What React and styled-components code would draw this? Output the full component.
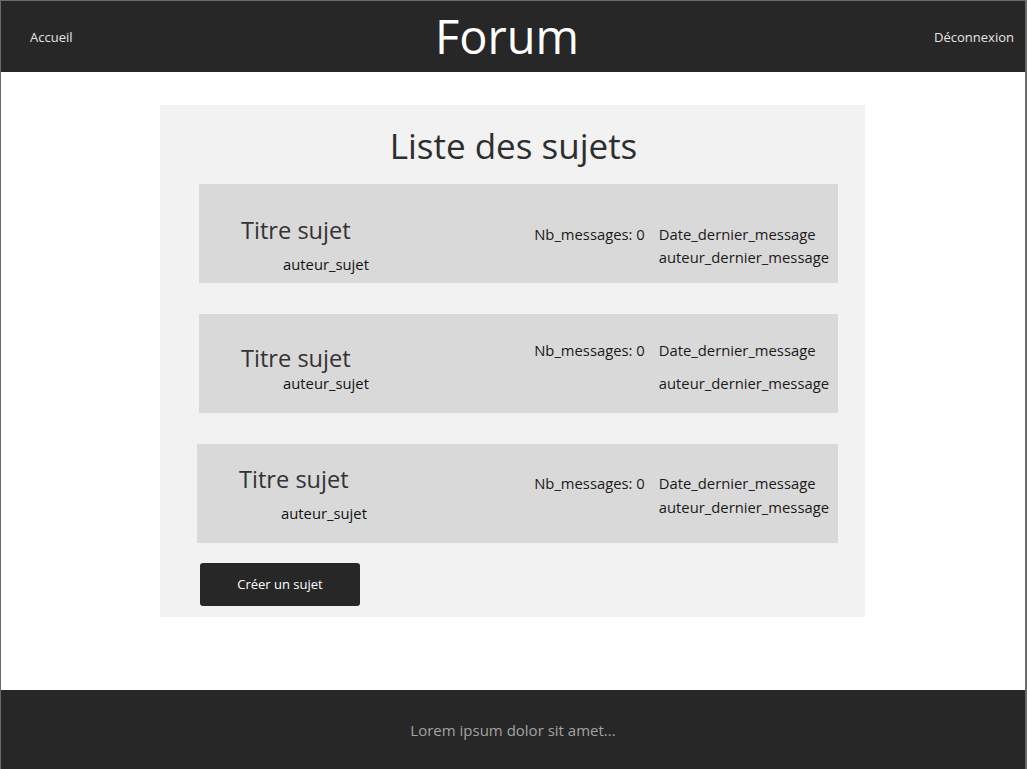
import React from 'react';
import styled, { createGlobalStyle } from 'styled-components';

const GlobalStyle = createGlobalStyle`
  html, body {
    margin: 0;
    padding: 0;
    background: #ffffff;
  }
  body {
    font-family: "Open Sans", "Liberation Sans", sans-serif;
  }
  * {
    box-sizing: border-box;
  }
`;

const Page = {
  Frame: styled.div`
    display: flex;
    flex-direction: column;
    height: 769px;
    border-top: 1px solid #6a6a6a;
    border-left: 1px solid #6a6a6a;
    border-right: 2px solid #6a6a6a;
    background: #ffffff;
  `,
  Header: styled.header`
    display: flex;
    align-items: center;
    justify-content: space-between;
    height: 71px;
    padding: 0 11px 0 29px;
    background-color: #272727;
  `,
  NavLink: styled.a`
    width: 120px;
    font-size: 13px;
    line-height: 18px;
    color: #e6e6e6;
    text-align: ${props => (props.right ? 'right' : 'left')};
    cursor: pointer;
  `,
  Brand: styled.h1`
    margin: 0 30px 2px 0;
    font-size: 47px;
    font-weight: 400;
    line-height: 60px;
    color: #ffffff;
  `,
  Main: styled.main`
    flex: 1;
    padding-top: 33px;
  `,
  Footer: styled.footer`
    display: flex;
    align-items: center;
    justify-content: center;
    height: 79px;
    padding-top: 1px;
    background-color: #272727;
    font-size: 15px;
    color: #a3a3a3;
  `,
};

const Board = {
  Panel: styled.section`
    display: flex;
    flex-direction: column;
    width: 705px;
    margin: 0 0 0 159px;
    padding: 19px 27px 11px 39px;
    background-color: #f2f2f2;
  `,
  Title: styled.h2`
    margin: 0 0 16px -38px;
    width: 705px;
    font-size: 35px;
    font-weight: 400;
    line-height: 44px;
    text-align: center;
    color: #2e2e2e;
  `,
  List: styled.div`
    display: flex;
    flex-direction: column;
    gap: 31px;
  `,
  CreateButton: styled.button`
    width: 160px;
    height: 43px;
    margin: 20px 0 0 1px;
    padding: 0 0 1px;
    border: none;
    border-radius: 3px;
    background-color: #272727;
    font-family: "Open Sans", "Liberation Sans", sans-serif;
    font-size: 13px;
    color: #ffffff;
    cursor: pointer;
  `,
};

const Topic = {
  Card: styled.article`
    display: flex;
    justify-content: space-between;
    height: 99px;
    margin-left: ${props => props.shift}px;
    padding: 0 9px 0 42px;
    background-color: #d9d9d9;
  `,
  Left: styled.div`
    display: flex;
    flex-direction: column;
    padding-top: ${props => props.top}px;
  `,
  Title: styled.div`
    font-size: 23.6px;
    line-height: 29px;
    color: #333333;
  `,
  Author: styled.div`
    margin: ${props => props.gap}px 0 0 42px;
    font-size: 14.8px;
    line-height: 20px;
    color: #111111;
  `,
  Meta: styled.div`
    display: flex;
    gap: 14px;
    padding-top: ${props => props.top}px;
    font-size: 14.8px;
    line-height: 20px;
    color: #1a1a1a;
  `,
  Last: styled.div`
    display: flex;
    flex-direction: column;
    gap: ${props => props.gap}px;
  `,
};

const topics = [
  { shift: 0, titleTop: 32, authorGap: 9, metaTop: 40, lastGap: 3 },
  { shift: 0, titleTop: 30, authorGap: 0, metaTop: 26, lastGap: 13 },
  { shift: -2, titleTop: 21, authorGap: 9, metaTop: 29, lastGap: 4 },
];

const TopicCard = ({ shift, titleTop, authorGap, metaTop, lastGap }) => (
  <Topic.Card shift={shift}>
    <Topic.Left top={titleTop}>
      <Topic.Title>Titre sujet</Topic.Title>
      <Topic.Author gap={authorGap}>auteur_sujet</Topic.Author>
    </Topic.Left>
    <Topic.Meta top={metaTop}>
      <div>Nb_messages: 0</div>
      <Topic.Last gap={lastGap}>
        <div>Date_dernier_message</div>
        <div>auteur_dernier_message</div>
      </Topic.Last>
    </Topic.Meta>
  </Topic.Card>
);

const App = () => (
  <>
    <GlobalStyle />
    <Page.Frame>
      <Page.Header>
        <Page.NavLink>Accueil</Page.NavLink>
        <Page.Brand>Forum</Page.Brand>
        <Page.NavLink right>Déconnexion</Page.NavLink>
      </Page.Header>
      <Page.Main>
        <Board.Panel>
          <Board.Title>Liste des sujets</Board.Title>
          <Board.List>
            {topics.map((topic, index) => (
              <TopicCard key={index} {...topic} />
            ))}
          </Board.List>
          <Board.CreateButton>Créer un sujet</Board.CreateButton>
        </Board.Panel>
      </Page.Main>
      <Page.Footer>Lorem ipsum dolor sit amet...</Page.Footer>
    </Page.Frame>
  </>
);

export default App;
